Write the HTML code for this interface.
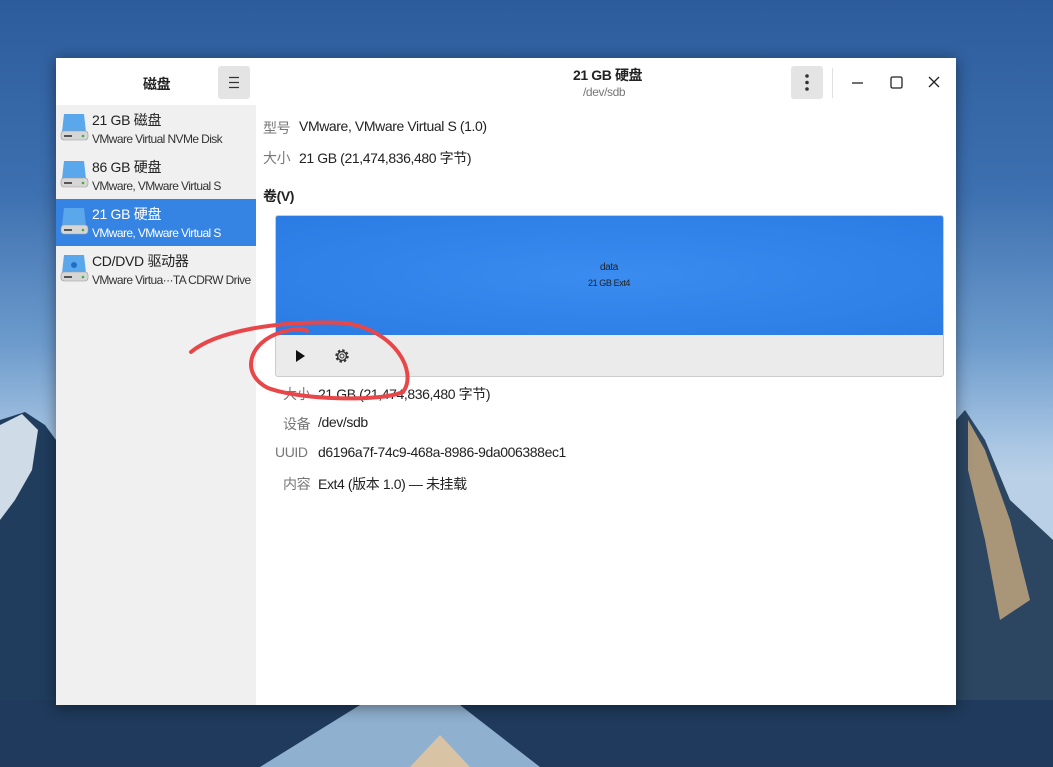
<!DOCTYPE html>
<html><head><meta charset="utf-8"><style>
*{margin:0;padding:0;box-sizing:border-box}
body{width:1053px;height:767px;overflow:hidden;position:relative;font-family:"Liberation Sans","Noto Sans CJK SC",sans-serif;background:linear-gradient(#2d5c9c 0%,#3d70b0 25%,#6d9bcc 45%,#a9c6e3 58%,#b9d0e6 62%);}
.abs{position:absolute}
.win{left:56px;top:58px;width:900px;height:647px;background:#fff;box-shadow:0 2px 14px rgba(0,0,0,.45)}
.side{left:0;top:47px;width:200px;height:600px;background:#f0f0f0}
.t{position:absolute;white-space:nowrap;letter-spacing:-0.4px}
.item{position:absolute;left:0;width:200px;height:47px}
.item .a{position:absolute;left:36px;top:5px;font-size:14px;color:#222;letter-spacing:-0.3px;white-space:nowrap}
.item .b{position:absolute;left:36px;top:27px;font-size:12px;color:#333;letter-spacing:-0.6px;white-space:nowrap}
.sel{background:#3584e4}.sel .a,.sel .b{color:#fff}
.lbl{color:#777;font-size:14px}.val{color:#222;font-size:14px}
</style></head><body>
<svg class="abs" style="left:0;top:0" width="1053" height="767">
<polygon points="0,420 25,412 45,425 56,440 56,767 0,767" fill="#203d5e"/>
<polygon points="0,425 22,414 38,430 32,470 15,500 0,520" fill="#cfdbe6"/>
<polygon points="956,420 965,410 985,440 1010,500 1053,540 1053,767 956,767" fill="#2c4662"/>
<polygon points="968,420 985,450 1010,520 1030,600 1000,620 985,540 968,470" fill="#a99578"/>
<rect x="0" y="700" width="1053" height="67" fill="#1f3a5c"/>
<polygon points="260,767 360,705 460,705 540,767" fill="#8fb0cf"/>
<polygon points="410,767 440,735 470,767" fill="#d9c3a5"/>
</svg>
<div class="abs win">
 <div class="abs side"></div>
 <div class="t" style="left:87px;top:16px;font-size:14px;font-weight:bold;color:#222">磁盘</div>
 <div class="abs" style="left:162px;top:8px;width:32px;height:33px;background:#e4e4e4;border-radius:3px"></div>
 <svg class="abs" style="left:162px;top:8px" width="32" height="33"><path d="M11 11.5H21M11 16.5H21M11 21.5H21" stroke="#333" stroke-width="1.2"/></svg>
 <div class="t" style="left:517px;top:7px;font-size:14px;font-weight:bold;color:#222">21 GB 硬盘</div>
 <div class="t" style="left:527px;top:27px;font-size:12px;color:#777">/dev/sdb</div>
 <div class="abs" style="left:735px;top:8px;width:32px;height:33px;background:#e4e4e4;border-radius:3px"></div>
 <svg class="abs" style="left:735px;top:8px" width="32" height="33"><circle cx="16" cy="10" r="1.8" fill="#333"/><circle cx="16" cy="16.5" r="1.8" fill="#333"/><circle cx="16" cy="23" r="1.8" fill="#333"/></svg>
 <div class="abs" style="left:776px;top:10px;width:1px;height:30px;background:#e0e0e0"></div>
 <svg class="abs" style="left:790px;top:14px" width="100" height="22"><line x1="6" y1="11" x2="17" y2="11" stroke="#222" stroke-width="1.3"/><rect x="45" y="5" width="11" height="11" rx="1.5" fill="none" stroke="#222" stroke-width="1.3"/><path d="M83 5 L93 15 M93 5 L83 15" stroke="#222" stroke-width="1.3"/></svg>

 <div class="item" style="top:47px"><div class="a">21 GB 磁盘</div><div class="b">VMware Virtual NVMe Disk</div></div>
 <div class="item" style="top:94px"><div class="a">86 GB 硬盘</div><div class="b">VMware, VMware Virtual S</div></div>
 <div class="item sel" style="top:141px"><div class="a">21 GB 硬盘</div><div class="b">VMware, VMware Virtual S</div></div>
 <div class="item" style="top:188px"><div class="a">CD/DVD 驱动器</div><div class="b">VMware Virtua···TA CDRW Drive</div></div>
 <svg class="abs" style="left:3px;top:52px" width="30" height="190">
  <g id="d"><path d="M5 4 H25 L27 22 H3 Z" fill="#5aa7ec"/><rect x="2" y="21" width="27" height="9" rx="3" fill="#d6d6d6" stroke="#999" stroke-width=".6"/><rect x="5" y="25" width="8" height="2" fill="#555"/><circle cx="24" cy="26" r="1.3" fill="#4a4"/></g>
  <use href="#d" y="47"/><use href="#d" y="94"/><use href="#d" y="141"/>
  <circle cx="15" cy="155" r="3" fill="#1e6fc5"/>
 </svg>

 <div class="t lbl" style="left:207px;top:60px">型号</div><div class="t val" style="left:243px;top:60px">VMware, VMware Virtual S (1.0)</div>
 <div class="t lbl" style="left:207px;top:90px">大小</div><div class="t val" style="left:243px;top:90px">21 GB (21,474,836,480 字节)</div>
 <div class="t" style="left:207px;top:128px;font-size:14px;font-weight:bold;color:#222">卷(V)</div>
 <div class="abs" style="left:219px;top:157px;width:669px;height:162px;border:1px solid #ccc;border-radius:3px;background:#ebebeb;overflow:hidden">
  <div class="abs" style="left:0;top:0;width:669px;height:119px;background:radial-gradient(ellipse at center,#3a8cf0,#2a7be3)"></div>
  <div class="t" style="left:324px;top:46px;font-size:10px;color:#222">data</div>
  <div class="t" style="left:312px;top:62px;font-size:9px;color:#222">21 GB Ext4</div>
  <svg class="abs" style="left:14px;top:130px" width="60" height="20"><path d="M6 4 L15 10 L6 16 Z" fill="#111"/><g transform="translate(52,10)"><circle r="5.6" fill="none" stroke="#333" stroke-width="2.2" stroke-dasharray="2.4 2"/><circle r="4.4" fill="none" stroke="#333" stroke-width="1.4"/><circle r="2" fill="none" stroke="#333" stroke-width="1"/></g></svg>
 </div>
 <div class="t lbl" style="left:227px;top:326px">大小</div><div class="t val" style="left:262px;top:326px">21 GB (21,474,836,480 字节)</div>
 <div class="t lbl" style="left:227px;top:356px">设备</div><div class="t val" style="left:262px;top:356px">/dev/sdb</div>
 <div class="t lbl" style="left:219px;top:386px">UUID</div><div class="t val" style="left:262px;top:386px">d6196a7f-74c9-468a-8986-9da006388ec1</div>
 <div class="t lbl" style="left:227px;top:416px">内容</div><div class="t val" style="left:262px;top:416px">Ext4 (版本 1.0) — 未挂载</div>
</div>
<svg class="abs" style="left:0;top:0" width="1053" height="767"><path d="M191 352 C215 332 275 320 345 323 C395 330 418 372 403 392 C380 402 300 400 268 388 C240 374 248 342 282 332 C296 328 305 329 307 331" fill="none" stroke="#e8474a" stroke-width="4" stroke-linecap="round"/></svg>
</body></html>
